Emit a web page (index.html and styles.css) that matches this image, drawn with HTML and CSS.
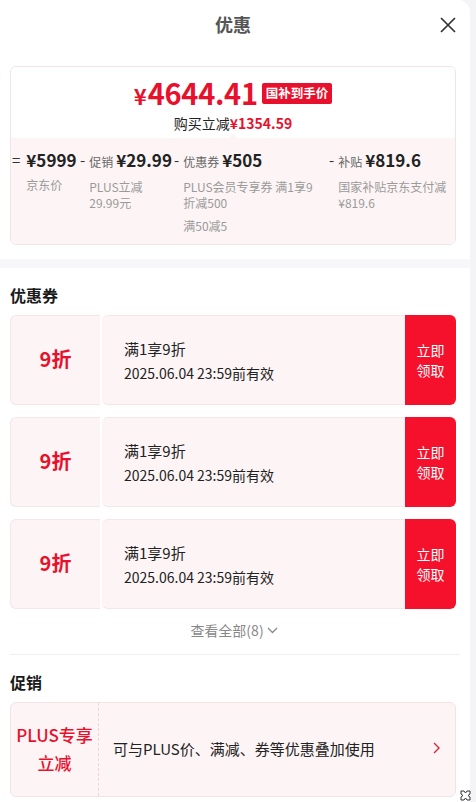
FILE: index.html
```html
<!DOCTYPE html>
<html lang="zh-CN">
<head>
<meta charset="utf-8">
<link rel="stylesheet" href="styles.css">
</head>
<body>
<div class="panel">
  <header class="head">
    <h1 class="title">优惠</h1>
    <button class="close" aria-label="关闭">
      <svg width="16" height="16" viewBox="0 0 16 16"><path d="M1 1L15 15M15 1L1 15" stroke="#333" stroke-width="1.7" fill="none"/></svg>
    </button>
  </header>

  <div class="price-card">
    <div class="price-top">
      <div class="price-line"><span class="yen">¥</span><span class="num">4644.41</span><span class="badge">国补到手价</span></div>
      <div class="save">购买立减<b>¥1354.59</b></div>
      <span class="notch"></span>
    </div>
    <div class="breakdown">
      <div class="col">
        <span class="op">=</span>
        <div class="body">
          <div class="amt">¥5999</div>
          <p class="lbl">京东价</p>
        </div>
      </div>
      <div class="col">
        <span class="op">-</span>
        <div class="body">
          <div class="amt"><small>促销</small>¥29.99</div>
          <p class="lbl">PLUS立减<br>29.99元</p>
        </div>
      </div>
      <div class="col">
        <span class="op">-</span>
        <div class="body">
          <div class="amt"><small>优惠券</small>¥505</div>
          <p class="lbl">PLUS会员专享券 满1享9折减500</p>
          <p class="lbl gap">满50减5</p>
        </div>
      </div>
      <div class="col">
        <span class="op">-</span>
        <div class="body">
          <div class="amt"><small>补贴</small>¥819.6</div>
          <p class="lbl last">国家补贴京东支付减<br>¥819.6</p>
        </div>
      </div>
    </div>
  </div>

  <div class="band"></div>

  <section class="sec coupons">
    <h2 class="sec-title">优惠券</h2>
    <div class="coupon">
      <div class="c-left">9折</div>
      <div class="c-mid"><p class="c-rule">满1享9折</p><p class="c-date">2025.06.04 23:59前有效</p></div>
      <button class="c-btn">立即<br>领取</button>
    </div>
    <div class="coupon">
      <div class="c-left">9折</div>
      <div class="c-mid"><p class="c-rule">满1享9折</p><p class="c-date">2025.06.04 23:59前有效</p></div>
      <button class="c-btn">立即<br>领取</button>
    </div>
    <div class="coupon">
      <div class="c-left">9折</div>
      <div class="c-mid"><p class="c-rule">满1享9折</p><p class="c-date">2025.06.04 23:59前有效</p></div>
      <button class="c-btn">立即<br>领取</button>
    </div>
    <div class="more">查看全部(8)<svg width="11" height="7" viewBox="0 0 11 7"><path d="M1 1L5.5 5.5L10 1" stroke="#888" stroke-width="1.3" fill="none"/></svg></div>
  </section>

  <section class="sec promos">
    <h2 class="sec-title">促销</h2>
    <div class="promo">
      <div class="p-left">PLUS专享<br>立减</div>
      <div class="p-text">可与PLUS价、满减、券等优惠叠加使用</div>
      <svg class="p-arrow" width="7" height="12" viewBox="0 0 7 12"><path d="M1 1L6 6L1 11" stroke="#d9263d" stroke-width="1.4" fill="none"/></svg>
    </div>
  </section>
</div>
<svg class="corner-icon" width="11" height="11" viewBox="0 0 11 11"><path d="M1 1L4 1L5.5 3L7 1L10 1L10 4L8 5.5L10 7L10 10L7 10L5.5 8L4 10L1 10L1 7L3 5.5L1 4Z" stroke="#333" stroke-width="1" fill="none"/></svg>
</body>
</html>
```

FILE: styles.css
```css
* { box-sizing: border-box; }
html, body { margin: 0; padding: 0; }
body {
  background: #f4f4f6;
  font-family: "Noto Sans CJK SC", "Noto Sans", sans-serif;
  color: #222;
  width: 476px;
  height: 802px;
  overflow: hidden;
}
p { margin: 0; }

.panel {
  width: 470px;
  height: 802px;
  background: #fff;
  border-top-right-radius: 12px;
  overflow: hidden;
}

.head {
  position: relative;
  height: 50px;
  display: flex;
  align-items: center;
  justify-content: center;
}
.title {
  margin: 0;
  font-size: 18px;
  font-weight: 700;
  color: #555;
  line-height: 24px;
  margin-top: -3px;
  margin-left: -4px;
}
.close {
  position: absolute;
  right: 14px;
  top: 17px;
  border: 0;
  background: none;
  padding: 0;
  width: 16px;
  height: 16px;
}

.price-card {
  margin: 16px 14px 0 10px;
  border: 1px solid #f1e4e6;
  border-radius: 6px;
  overflow: hidden;
}
.price-top {
  position: relative;
  height: 71px;
  background: #fff;
  display: flex;
  flex-direction: column;
  align-items: center;
  padding-top: 9px;
}
.notch {
  position: absolute;
  bottom: 0;
  left: 50%;
  width: 0; height: 0;
  margin-left: -5px;
  border-left: 5px solid transparent;
  border-right: 5px solid transparent;
  border-bottom: 4px solid #fdf5f5;
}
.price-line {
  display: flex;
  align-items: baseline;
  color: #e8112d;
  font-weight: 700;
  line-height: 32px;
  height: 32px;
}
.yen { font-size: 22px; margin-right: 1px; }
.num { font-size: 29px; letter-spacing: -0.3px; }
.badge {
  align-self: center;
  margin-left: 4px;
  margin-top: 3px;
  background: #e8112d;
  color: #fff;
  font-size: 12.5px;
  line-height: 20px;
  height: 21px;
  padding: 0 4px;
  border-radius: 2px;
  font-weight: 700;
}
.save {
  margin-top: 6px;
  font-size: 14px;
  line-height: 18px;
  color: #222;
}
.save b { color: #e8112d; font-weight: 700; }

.breakdown {
  background: #fdf5f5;
  height: 106px;
  display: grid;
  grid-template-columns: 68px 94px 155px 1fr;
  padding: 10px 0 0 1px;
}
.col { display: flex; align-items: flex-start; }
.op {
  font-size: 15px;
  line-height: 24px;
  color: #333;
  padding-right: 4px;
}
.col:first-child .op { padding-right: 6px; }
.body { flex: 1; min-width: 0; }
.amt {
  font-size: 17px;
  font-weight: 700;
  color: #222;
  line-height: 24px;
  white-space: nowrap;
}
.amt small {
  font-size: 12px;
  font-weight: 400;
  color: #666;
  margin-right: 3px;
}
.lbl {
  margin-top: 5px;
  font-size: 12px;
  line-height: 16px;
  color: #9a9a9a;
  padding-right: 6px;
}
.lbl.last { padding-right: 0; white-space: nowrap; }
.lbl.gap { margin-top: 7px; }

.band {
  margin-top: 14px;
  height: 9px;
  background: #f7f7f9;
}

.sec { padding: 0 14px 0 10px; }
.sec-title {
  margin: 0;
  font-size: 16px;
  font-weight: 700;
  color: #1a1a1a;
  line-height: 22px;
  padding: 16px 0 9px;
}

.coupon {
  display: flex;
  height: 90px;
  margin-bottom: 12px;
}
.c-left {
  width: 90px;
  background: #fdf5f5;
  border: 1px solid #f5e6e8;
  border-right: none;
  border-radius: 6px 0 0 6px;
  display: flex;
  align-items: center;
  justify-content: center;
  font-size: 20px;
  font-weight: 700;
  color: #e8112d;
  padding-bottom: 3px;
}
.c-mid {
  flex: 1;
  margin-left: 2px;
  background: #fdf5f5;
  border: 1px solid #f5e6e8;
  border-left: none;
  border-right: none;
  border-radius: 6px 0 0 6px;
  padding: 21px 0 0 22px;
}
.c-rule { font-size: 15px; line-height: 24px; color: #222; }
.c-date { font-size: 14px; line-height: 22px; color: #222; margin-top: 1px; }
.c-btn {
  width: 51px;
  border: 0;
  padding: 0;
  background: #f5112b;
  color: #fff;
  font-family: inherit;
  font-size: 14px;
  line-height: 20px;
  border-radius: 0 6px 6px 0;
}

.more {
  display: flex;
  align-items: center;
  justify-content: center;
  gap: 3px;
  height: 22px;
  margin-top: -2px;
  font-size: 14px;
  color: #888;
  padding-left: 2px;
}
.coupons::after {
  content: "";
  display: block;
  height: 1px;
  background: #f0f0f0;
  margin-top: 13px;
  margin-right: -4px;
}
.promos .sec-title { padding: 16px 0 9px; }

.promo {
  display: flex;
  align-items: center;
  height: 95px;
  background: #fdf5f5;
  border: 1px solid #f3e3e5;
  border-radius: 6px;
}
.p-left {
  width: 88px;
  height: 100%;
  display: flex;
  align-items: center;
  justify-content: center;
  text-align: center;
  font-size: 17px;
  line-height: 28px;
  color: #e8112d;
  font-weight: 500;
  border-right: 1px dashed #ead6d8;
  padding-bottom: 2px;
}
.p-text {
  flex: 1;
  padding-left: 14px;
  padding-bottom: 3px;
  font-size: 15px;
  color: #222;
}
.p-arrow { margin-right: 15px; margin-bottom: 3px; }

.corner-icon {
  position: fixed;
  left: 460px;
  top: 790px;
}
```
